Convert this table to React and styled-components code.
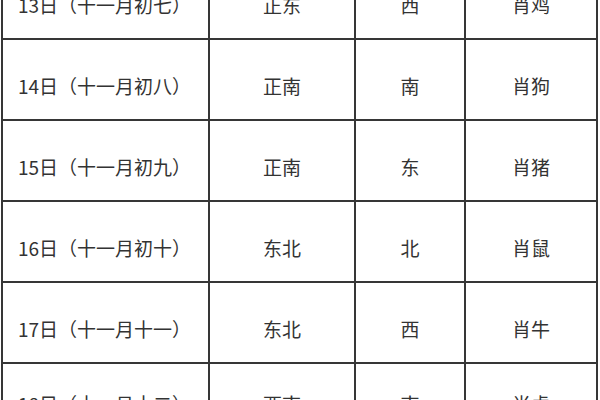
import React from "react";
import styled, { createGlobalStyle } from "styled-components";

const GlobalStyle = createGlobalStyle`
  html, body {
    margin: 0;
    padding: 0;
    background: #ffffff;
  }
`;

const Page = styled.div`
  width: 600px;
  height: 400px;
  overflow: hidden;
  background: #ffffff;
`;

const Sheet = styled.div`
  margin-top: -43px;
  margin-left: 1px;
  width: 595px;
  border-left: 2px solid #363636;
  border-top: 2px solid #363636;
  font-family: "Noto Sans CJK SC", "Liberation Sans", sans-serif;
  font-size: 19px;
  color: #333333;
`;

const Row = styled.div`
  display: grid;
  grid-template-columns: 207px 146px 110px 132px;
  height: 81px;
`;

const Cell = styled.div`
  display: flex;
  align-items: center;
  justify-content: ${(p) => (p.$left ? "flex-start" : "center")};
  padding-top: ${(p) => (p.$tail ? "0" : "12px")};
  padding-left: ${(p) => (p.$left ? "15px" : "0")};
  border-right: 2px solid #363636;
  border-bottom: 2px solid #363636;
  white-space: nowrap;
`;

const rows = [
  ["13日（十一月初七）", "正东", "西", "肖鸡"],
  ["14日（十一月初八）", "正南", "南", "肖狗"],
  ["15日（十一月初九）", "正南", "东", "肖猪"],
  ["16日（十一月初十）", "东北", "北", "肖鼠"],
  ["17日（十一月十一）", "东北", "西", "肖牛"],
  ["18日（十一月十二）", "西南", "南", "肖虎"],
];

const App = () => {
  return (
    <>
      <GlobalStyle />
      <Page>
        <Sheet>
          {rows.map((r, i) => {
            const tail = i === rows.length - 1;
            return (
              <Row key={r[0]}>
                <Cell $left $tail={tail}>{r[0]}</Cell>
                <Cell $tail={tail}>{r[1]}</Cell>
                <Cell $tail={tail}>{r[2]}</Cell>
                <Cell $tail={tail}>{r[3]}</Cell>
              </Row>
            );
          })}
        </Sheet>
      </Page>
    </>
  );
};

export default App;
